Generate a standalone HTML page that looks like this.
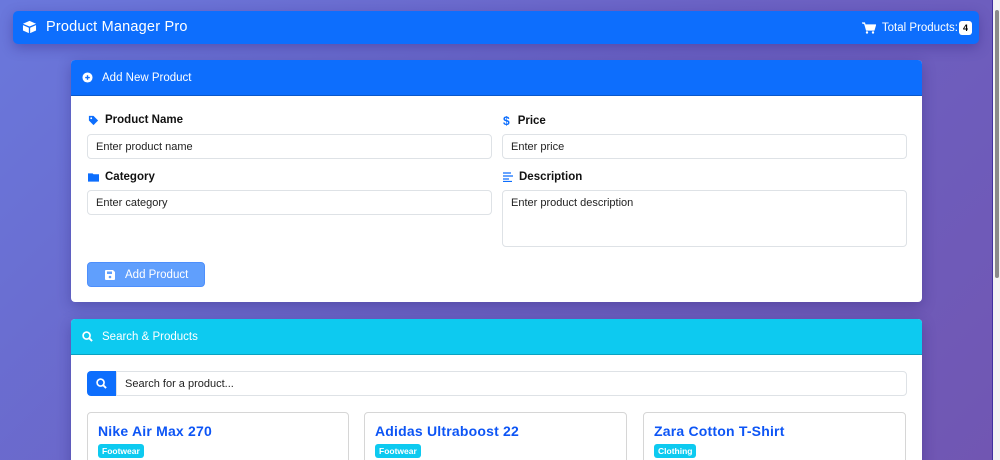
<!DOCTYPE html>
<html><head><meta charset="utf-8"><style>
*{box-sizing:border-box;margin:0;padding:0}
html,body{width:1000px;height:460px;overflow:hidden}
body{font-family:"Liberation Sans",sans-serif;background:linear-gradient(135deg,#6a78dc 0%,#6b62c4 50%,#7156b2 100%);position:relative}
.nav{position:absolute;left:13px;top:11px;width:966px;height:33px;background:#0d6efd;border-radius:5px;box-shadow:0 4px 12px rgba(40,30,120,.35);color:#fff}
.nav .t{position:absolute;left:33px;top:8px;font-size:14.5px;letter-spacing:.2px}
.nav .r{position:absolute;right:7px;top:10px;font-size:11.5px;display:flex;align-items:center}
.badge4{background:#fff;color:#000;font-weight:bold;font-size:9px;border-radius:3px;padding:2px 4px;margin-left:1px}
.card{position:absolute;left:71px;width:851px;background:#fff;border-radius:4px;overflow:hidden;box-shadow:0 4px 14px rgba(30,20,100,.3)}
.hd{height:36px;color:#fff;font-size:11.5px;display:flex;align-items:center;padding-left:11px}
.hd svg{margin-right:9px}
.lbl{position:absolute;font-weight:bold;font-size:11.5px;color:#111;display:flex;align-items:center}
.lbl svg{margin-right:6px}
.inp{position:absolute;border:1px solid #dee2e6;border-radius:4px;font-size:11px;color:#222;padding:6px 8px}
.pc{position:absolute;top:93px;width:262px;height:60px;border:1px solid #d6d6d6;border-radius:4px;padding:10px 10px}
.pc b{display:block;color:#0d55f5;font-size:14px;letter-spacing:.2px}
.pc span{display:inline-block;margin-top:5px;background:#0dcaf0;color:#fff;font-weight:bold;font-size:8.5px;border-radius:3px;padding:2px 4px}
</style></head><body>
<div class="nav">
<svg style="position:absolute;left:9px;top:9px" width="15" height="14" viewBox="0 0 16 15"><path d="M8 1L15 4L8 7L1 4Z" fill="#fff"/><path d="M1 5.5L7.3 8.3V14L1 11.2Z M15 5.5L8.7 8.3V14L15 11.2Z" fill="#fff"/></svg>
<div class="t">Product Manager Pro</div>
<div class="r"><svg width="14" height="12" viewBox="0 0 14 12" style="margin-right:6px"><path d="M0 1H2.5L4.5 8H12L13.5 3H3.5" fill="#fff" stroke="#fff" stroke-width="1.2"/><circle cx="5" cy="10.5" r="1.2" fill="#fff"/><circle cx="11" cy="10.5" r="1.2" fill="#fff"/></svg>Total Products:<span class="badge4">4</span></div>
</div>

<div class="card" style="top:60px;height:242px">
<div class="hd" style="background:#0d6efd;border-bottom:1px solid #0a58ca"><svg width="11" height="11" viewBox="0 0 12 12"><circle cx="6" cy="6" r="5.5" fill="#fff"/><path d="M6 3.5V8.5M3.5 6H8.5" stroke="#0d6efd" stroke-width="1.5"/></svg>Add New Product</div>
<div class="lbl" style="left:17px;top:54px"><svg width="11" height="11" viewBox="0 0 12 12"><path d="M1 1H6L11 6L6 11L1 6Z" fill="#0d6efd"/><circle cx="3.5" cy="3.5" r="1" fill="#fff"/></svg>Product Name</div>
<div class="inp" style="left:16px;top:74px;width:405px;height:25px">Enter product name</div>
<div class="lbl" style="left:432px;top:54px"><span style="color:#0d6efd;font-size:12px;margin-right:8px">$</span>Price</div>
<div class="inp" style="left:431px;top:74px;width:405px;height:25px">Enter price</div>
<div class="lbl" style="left:17px;top:111px"><svg width="11" height="10" viewBox="0 0 12 10"><path d="M0 1H5L6 2H12V10H0Z" fill="#0d6efd"/></svg>Category</div>
<div class="inp" style="left:16px;top:130px;width:405px;height:25px">Enter category</div>
<div class="lbl" style="left:432px;top:111px"><svg width="10" height="10" viewBox="0 0 10 10"><path d="M0 1H8M0 4H10M0 7H6M0 9.5H9" stroke="#0d6efd" stroke-width="1.3"/></svg>Description</div>
<div class="inp" style="left:431px;top:130px;width:405px;height:57px">Enter product description</div>
<div style="position:absolute;left:16px;top:202px;width:118px;height:25px;background:#609ffd;border:1px solid #4d8ffc;border-radius:4px;color:#fff;font-size:11.5px;display:flex;align-items:center;padding-left:17px"><svg width="10" height="10" viewBox="0 0 10 10" style="margin-right:10px"><path d="M0 1Q0 0 1 0H8L10 2V9Q10 10 9 10H1Q0 10 0 9Z" fill="#fff"/><rect x="2" y="1.5" width="5" height="2.5" fill="#609ffd"/><circle cx="5" cy="7" r="1.3" fill="#609ffd"/></svg>Add Product</div>
</div>

<div class="card" style="top:319px;height:160px">
<div class="hd" style="background:#0dcaf0;border-bottom:1px solid #0aa2c0"><svg width="11" height="11" viewBox="0 0 12 12"><circle cx="5" cy="5" r="3.8" fill="none" stroke="#fff" stroke-width="1.8"/><path d="M8 8L11 11" stroke="#fff" stroke-width="2"/></svg>Search &amp; Products</div>
<div style="position:absolute;left:16px;top:52px;width:29px;height:25px;background:#0d6efd;border-radius:4px 0 0 4px;display:flex;align-items:center;justify-content:center"><svg width="11" height="11" viewBox="0 0 12 12"><circle cx="5" cy="5" r="3.8" fill="none" stroke="#fff" stroke-width="1.8"/><path d="M8 8L11 11" stroke="#fff" stroke-width="2"/></svg></div>
<div class="inp" style="left:45px;top:52px;width:791px;height:25px;border-radius:0 4px 4px 0">Search for a product...</div>
<div class="pc" style="left:16px"><b>Nike Air Max 270</b><span>Footwear</span></div>
<div class="pc" style="left:293px;width:263px"><b>Adidas Ultraboost 22</b><span>Footwear</span></div>
<div class="pc" style="left:572px;width:263px"><b>Zara Cotton T-Shirt</b><span>Clothing</span></div>
</div>

<div style="position:absolute;left:992px;top:0;width:8px;height:460px;background:#f3f3f3;border-left:1px solid #4030a0"></div>
<div style="position:absolute;left:995px;top:10px;width:4px;height:268px;background:#8a8a8a;border-radius:2px"></div>
</body></html>
